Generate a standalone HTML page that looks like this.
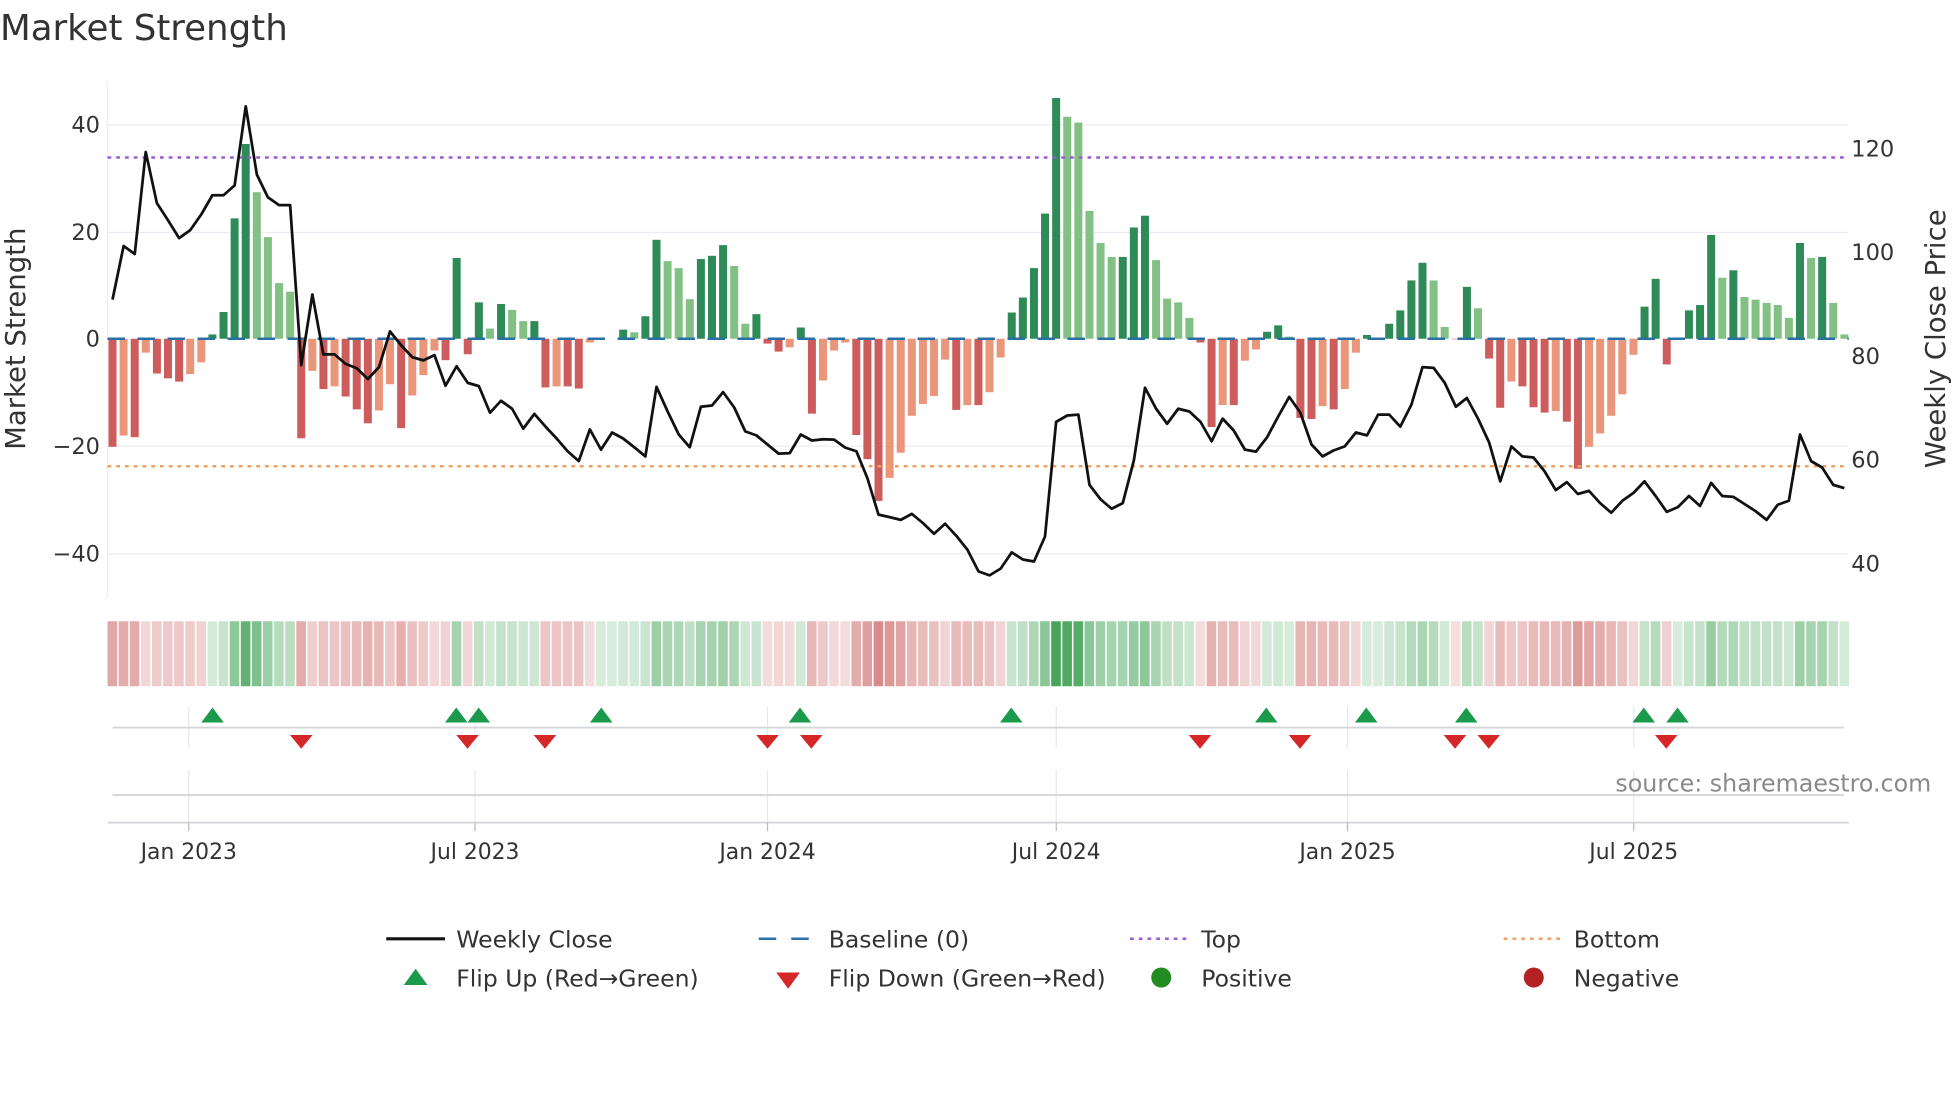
<!DOCTYPE html>
<html><head><meta charset="utf-8"><style>
html,body{margin:0;padding:0;background:#fff;}
svg{display:block;font-family:"DejaVu Sans","Liberation Sans",sans-serif;}
</style></head><body>
<svg id="s" width="1960" height="1102" viewBox="0 0 1568 881.6" xmlns="http://www.w3.org/2000/svg">
<text x="0" y="32" font-size="28.5" fill="#333">Market Strength</text>
<g stroke="#ececf2" stroke-width="1">
<line x1="86" y1="100" x2="1479" y2="100"/><line x1="86" y1="186" x2="1479" y2="186"/>
<line x1="86" y1="357" x2="1479" y2="357"/><line x1="86" y1="443" x2="1479" y2="443"/>
</g>
<line x1="86" y1="65" x2="86" y2="478" stroke="#eceff3" stroke-width="1"/>
<g font-size="18" fill="#333" text-anchor="end">
<text x="80" y="106">40</text><text x="80" y="192">20</text><text x="80" y="277">0</text>
<text x="80" y="363">−20</text><text x="80" y="449">−40</text>
</g>
<g font-size="18" fill="#333">
<text x="1481" y="125">120</text><text x="1481" y="208">100</text><text x="1481" y="291">80</text>
<text x="1481" y="374">60</text><text x="1481" y="457">40</text>
</g>
<text transform="translate(20,271) rotate(-90)" font-size="22" fill="#333" text-anchor="middle">Market Strength</text>
<text transform="translate(1556,271) rotate(-90)" font-size="22" fill="#333" text-anchor="middle">Weekly Close Price</text>
<g id="bars"></g>
<line x1="86" y1="271" x2="1479" y2="271" stroke="#2a6fa8" stroke-width="2" stroke-dasharray="14,10"/>
<line x1="86" y1="126" x2="1479" y2="126" stroke="#9b59d6" stroke-width="2" stroke-dasharray="3,4"/>
<line x1="86" y1="373" x2="1479" y2="373" stroke="#f0a060" stroke-width="2" stroke-dasharray="3,4"/>
<polyline id="price" fill="none" stroke="#111" stroke-width="2.2" stroke-linejoin="round"/>
<g id="heat"></g>
<g stroke="#e6e9ef" stroke-width="1">
<line x1="151" y1="565" x2="151" y2="598"/><line x1="380" y1="565" x2="380" y2="598"/><line x1="614" y1="565" x2="614" y2="598"/><line x1="845" y1="565" x2="845" y2="598"/><line x1="1078" y1="565" x2="1078" y2="598"/><line x1="1307" y1="565" x2="1307" y2="598"/>
<line x1="151" y1="616" x2="151" y2="658"/><line x1="380" y1="616" x2="380" y2="658"/><line x1="614" y1="616" x2="614" y2="658"/><line x1="845" y1="616" x2="845" y2="658"/><line x1="1078" y1="616" x2="1078" y2="658"/><line x1="1307" y1="616" x2="1307" y2="658"/>
</g>
<line x1="90" y1="582" x2="1475" y2="582" stroke="#d4d6da" stroke-width="1.5"/>
<line x1="90" y1="636" x2="1475" y2="636" stroke="#d4d6da" stroke-width="1.5"/>
<line x1="86" y1="658" x2="1479" y2="658" stroke="#d4d6da" stroke-width="1.5"/>
<g stroke="#bbb" stroke-width="1">
<line x1="151" y1="658" x2="151" y2="665"/><line x1="380" y1="658" x2="380" y2="665"/><line x1="614" y1="658" x2="614" y2="665"/><line x1="845" y1="658" x2="845" y2="665"/><line x1="1078" y1="658" x2="1078" y2="665"/><line x1="1307" y1="658" x2="1307" y2="665"/>
</g>
<g id="marks"></g>
<g font-size="17.5" fill="#333" text-anchor="middle">
<text x="151" y="687">Jan 2023</text><text x="380" y="687">Jul 2023</text><text x="614" y="687">Jan 2024</text>
<text x="845" y="687">Jul 2024</text><text x="1078" y="687">Jan 2025</text><text x="1307" y="687">Jul 2025</text>
</g>
<text x="1545" y="633" font-size="19" fill="#8a8a8a" text-anchor="end">source: sharemaestro.com</text>
<g font-size="18.8" fill="#333">
<line x1="309" y1="751" x2="356" y2="751" stroke="#111" stroke-width="2.5"/>
<text x="365" y="758">Weekly Close</text>
<line x1="607" y1="751" x2="656" y2="751" stroke="#2a6fa8" stroke-width="2" stroke-dasharray="14,12"/>
<text x="663" y="758">Baseline (0)</text>
<line x1="904" y1="751" x2="950" y2="751" stroke="#9b59d6" stroke-width="2" stroke-dasharray="3,4"/>
<text x="961" y="758">Top</text>
<line x1="1203" y1="751" x2="1249" y2="751" stroke="#f0a060" stroke-width="2" stroke-dasharray="3,4"/>
<text x="1259" y="758">Bottom</text>
<polygon points="323,788 342,788 332.5,775" fill="#1a9a4a"/>
<text x="365" y="789">Flip Up (Red→Green)</text>
<polygon points="621,778 640,778 630.5,791" fill="#d62728"/>
<text x="663" y="789">Flip Down (Green→Red)</text>
<circle cx="929" cy="782" r="8" fill="#228b22"/>
<text x="961" y="789">Positive</text>
<circle cx="1227" cy="782" r="8" fill="#b22222"/>
<text x="1259" y="789">Negative</text>
</g>
</svg>
<script>
var B="-20.2R,-18.1O,-18.4R,-2.6O,-6.5R,-7.4R,-8R,-6.6O,-4.4O,0.8D,5D,22.5D,36.4D,27.4L,19L,10.4L,8.8L,-18.6R,-6O,-9.4R,-8.9O,-10.8R,-13.2R,-15.8R,-13.4O,-8.5O,-16.7R,-10.6O,-6.8O,-2.2O,-4R,15.1D,-2.9R,6.8D,1.9L,6.5D,5.4L,3.3L,3.3D,-9.1R,-8.9O,-8.9R,-9.3R,-0.7O,0.2L,0L,1.7D,1.2L,4.2D,18.5D,14.5L,13.2L,7.4L,14.9D,15.5D,17.5D,13.6L,2.8L,4.6D,-0.9R,-2.4R,-1.6O,2.1D,-14R,-7.8O,-2.2O,-0.7O,-18R,-22.5R,-30.3R,-26O,-21.3O,-14.4O,-12.2O,-10.7O,-3.9O,-13.3R,-12.4O,-12.4R,-10O,-3.5O,4.9D,7.7D,13.2D,23.4D,45D,41.5L,40.4L,23.9L,17.9L,15.3L,15.3D,20.8D,23D,14.7L,7.5L,6.8L,3.9L,-0.7R,-16.5R,-12.4O,-12.4R,-4.1O,-2O,1.3D,2.5D,0.4L,-14.8R,-15R,-12.6O,-13.2R,-9.4O,-2.6O,0.7D,0L,2.8D,5.3D,10.9D,14.2D,10.9L,2.2L,-0.1R,9.7D,5.7L,-3.7R,-12.9R,-8O,-8.9R,-12.8R,-13.8R,-13.5O,-15.5R,-24.3R,-20.2O,-17.7O,-14.4O,-10.4O,-3O,6D,11.2D,-4.8R,0L,5.3D,6.3D,19.4D,11.4L,12.8D,7.8L,7.3L,6.7L,6.3L,3.9L,17.9D,15.1L,15.3D,6.7L,0.8L".split(",");
var P1=[755,620,640,383,512,555,600,580,540,492,492,467,268,440,497,517,517,920,742,893,893,917,928,955,925,835,870,900,908,895,972,923,965,973,1040,1010,1030,1080,1043,1075,1105,1137,1162,1082,1133,1090,1105,1127,1150,975,1037,1095,1127,1025,1022,988,1027,1087,1097,1120,1143,1142,1095,1110,1107,1108,1128,1137,1205,1297,1303,1310,1295,1318,1345,1320,1350,1385];
var P2=[1440,1450,1433,1392,1410,1415,1352,1063,1047,1045,1222,1258,1282,1268,1160,977,1030,1068,1030,1037,1063,1112,1055,1085,1133,1138,1102,1050,1000,1040,1120,1150,1135,1125,1090,1097,1045,1045,1075,1020,925,927,965,1025,1003,1055,1115,1213,1125,1150,1153,1188,1235,1215,1245,1237,1268,1292,1262,1242,1213,1250,1290,1278,1250,1275,1217,1250,1252,1270,1288,1310,1272,1262,1095,1162,1178,1222,1230];
var P=P1.concat(P2);
var C={D:"#2e8b57",L:"#82c084",R:"#cd5c5c",O:"#e9967a"};
var ns="http://www.w3.org/2000/svg",bars=document.getElementById("bars"),heat=document.getElementById("heat"),marks=document.getElementById("marks");
function el(t,a,p){var e=document.createElementNS(ns,t);for(var k in a)e.setAttribute(k,a[k]);p.appendChild(e);return e;}
var step=(1475.5-90)/156,pts=[];
function mix(c,a){return "rgb("+c.map(function(v){return Math.round(255+(v-255)*a)}).join(",")+")";}
for(var i=0;i<B.length;i++){
 var s=B[i],v=parseFloat(s),c=s.slice(-1),x=90+i*step;
 var h=Math.abs(v)*4.28;
 if(h>0.3) el("rect",{x:x-3.2,y:v>=0?271-h:271,width:6.4,height:h,fill:C[c]},bars);
 var a=Math.min(0.95,0.2+Math.abs(v)/45*0.75);
 var col=v>=0?mix([60,160,80],a):mix([200,90,90],a);
 el("rect",{x:x-4.44+0.5,y:497,width:step-1.2,height:52,fill:col},heat);
 pts.push(x.toFixed(1)+","+(P[i]/3.15).toFixed(1));
}
document.getElementById("price").setAttribute("points",pts.join(" "));
[170,365,383,481,640,809,1013,1093,1173,1315,1342].forEach(function(x){el("polygon",{points:(x-9)+",578 "+(x+9)+",578 "+x+",566",fill:"#1a9a4a"},marks);});
[241,374,436,614,649,960,1040,1164,1191,1333].forEach(function(x){el("polygon",{points:(x-9)+",588 "+(x+9)+",588 "+x+",599",fill:"#d62728"},marks);});
</script>
</body></html>
